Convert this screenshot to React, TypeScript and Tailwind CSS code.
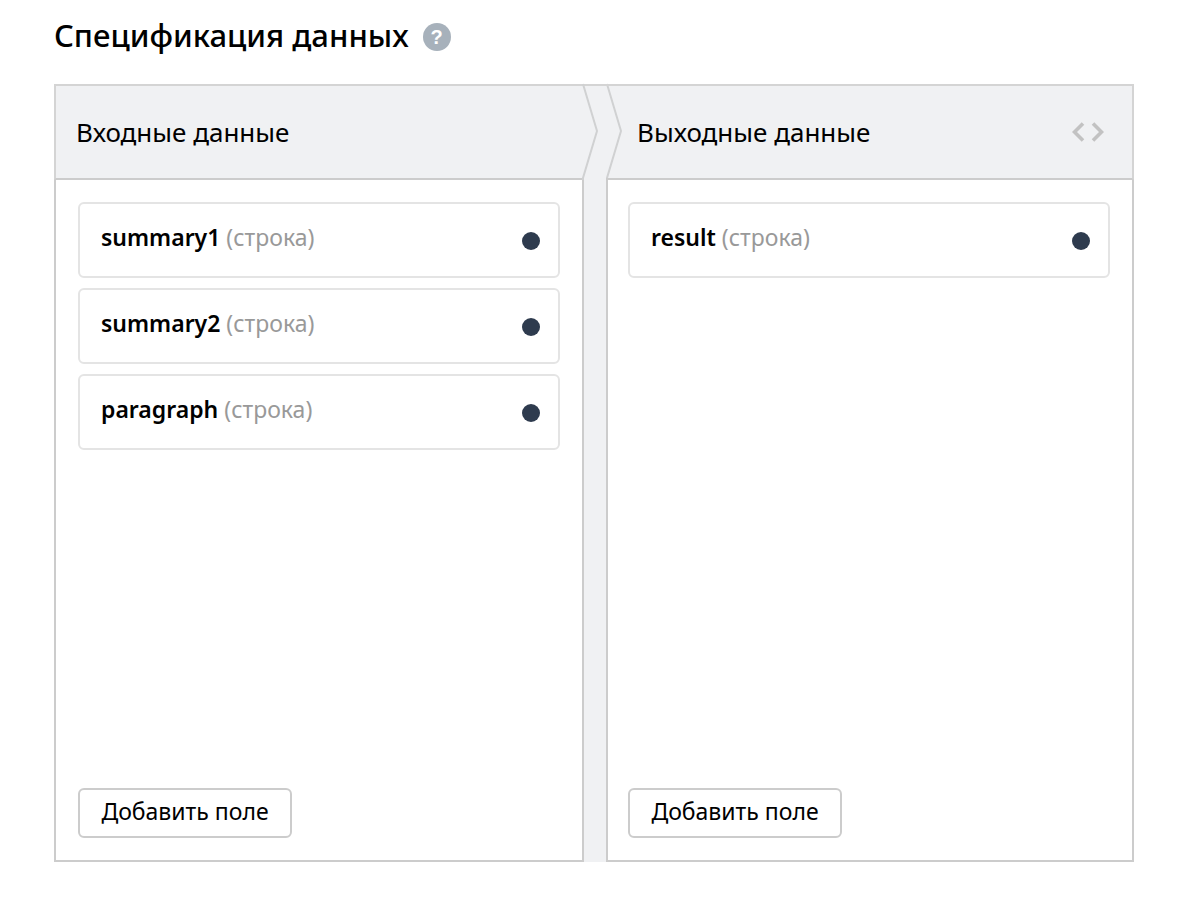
import React from "react";

type Field = { name: string; type: string };

const inputFields: Field[] = [
  { name: "summary1", type: "строка" },
  { name: "summary2", type: "строка" },
  { name: "paragraph", type: "строка" },
];

const outputFields: Field[] = [{ name: "result", type: "строка" }];

function FieldCard({ field }: { field: Field }) {
  return (
    <li className="flex h-[76px] items-center justify-between rounded-md border-2 border-[#e4e4e4] bg-white pr-[18px] pl-[21px]">
      <p className="pb-1.5 text-[23px] leading-8">
        <span className="font-semibold text-black">{field.name}</span>{" "}
        <span className="text-[#999999]">({field.type})</span>
      </p>
      <span className="mt-px size-[18px] rounded-full bg-[#2e3b4e]" />
    </li>
  );
}

function FieldPanel({ fields, className }: { fields: Field[]; className: string }) {
  return (
    <div
      className={`flex min-h-[682px] flex-col items-stretch justify-between border-x-2 border-b-2 border-[#cccccc] bg-white py-[22px] ${className}`}
    >
      <ul className="flex flex-col gap-[10px]">
        {fields.map((field) => (
          <FieldCard key={field.name} field={field} />
        ))}
      </ul>
      <button
        type="button"
        className="h-[50px] w-[214px] self-start rounded-md border-2 border-[#cccccc] bg-white pb-1 text-[23px] leading-8 text-black"
      >
        Добавить поле
      </button>
    </div>
  );
}

export default function App() {
  return (
    <main className="bg-white px-14 pt-4 pb-9 pl-[54px] font-['Noto_Sans','Open_Sans',sans-serif] text-black">
      <div className="flex h-10 items-center gap-[14px]">
        <h1 className="pb-0.5 text-[31px] leading-10 font-medium">Спецификация данных</h1>
        <button
          type="button"
          aria-label="Справка"
          className="mt-0.5 flex size-7 items-center justify-center rounded-full bg-[#a7b1bb] font-['Liberation_Sans',sans-serif] text-xl leading-7 font-bold text-white"
        >
          ?
        </button>
      </div>

      <section className="mt-7 grid grid-cols-[530fr_22px_528fr] bg-[#f0f1f3]">
        <header className="flex h-24 items-center border-t-2 border-b-2 border-l-2 border-t-[#d4d4d4] border-b-[#cccccc] border-l-[#d4d4d4] pl-5">
          <h2 className="text-[26px] leading-9">Входные данные</h2>
        </header>
        <svg
          aria-hidden="true"
          viewBox="0 0 22 96"
          className="h-24 w-[22px] overflow-visible"
          fill="none"
          stroke="#d0d1d2"
          strokeWidth="2"
        >
          <path d="M0 1H22" stroke="#d4d4d4" />
          <path d="M-1 0L13 47L-1 94V96" />
          <path d="M23 0L37 47L23 94V96" />
        </svg>
        <header className="flex h-24 items-center justify-between border-t-2 border-r-2 border-b-2 border-t-[#d4d4d4] border-r-[#d4d4d4] border-b-[#cccccc] pr-7 pl-[31px]">
          <h2 className="text-[26px] leading-9">Выходные данные</h2>
          <button type="button" aria-label="Показать код">
            <svg
              viewBox="0 0 32 20"
              className="h-5 w-8"
              fill="none"
              stroke="#c2c2c2"
              strokeWidth="3.6"
            >
              <path d="M11 1.5L2.5 10L11 18.5" />
              <path d="M21 1.5L29.5 10L21 18.5" />
            </svg>
          </button>
        </header>

        <FieldPanel fields={inputFields} className="px-[22px]" />
        <div />
        <FieldPanel fields={outputFields} className="pr-[22px] pl-5" />
      </section>
    </main>
  );
}
